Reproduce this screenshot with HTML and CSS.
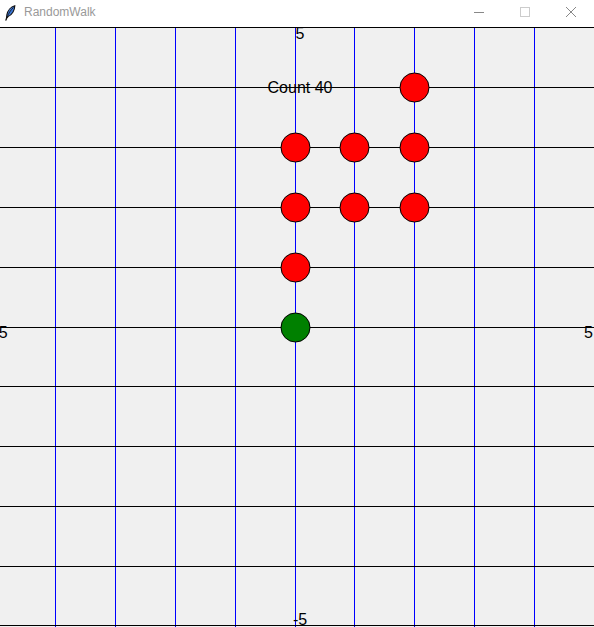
FILE: index.html
```html
<!DOCTYPE html>
<html>
<head>
  <title>RandomWalk</title>
  <link rel="stylesheet" href="styles.css">
</head>
<body>
  <div class="window">
    <div class="titlebar">
      <svg class="app-icon" width="11" height="16" viewBox="0 0 11 16">
        <path d="M9.8 0.8 C6 1.8 2.5 5.5 1.8 10.2 L1.4 13.6 L3 11.6 C7 10 9.8 5.2 9.8 0.8 Z" fill="#3b78d8" stroke="#111" stroke-width="1.1"/>
        <path d="M8.5 2.5 C5.5 5 3.5 8.5 2.2 12.5" fill="none" stroke="#111" stroke-width="0.8"/>
        <path d="M1.4 13.6 L0.8 15.6" stroke="#111" stroke-width="1.1"/>
      </svg>
      <span class="title">RandomWalk</span>
      <div class="controls">
        <span class="ctl"><svg width="12" height="12" viewBox="0 0 12 12"><path d="M1 6.5 H11" stroke="#888" stroke-width="1"/></svg></span>
        <span class="ctl"><svg width="12" height="12" viewBox="0 0 12 12"><rect x="1.5" y="1.5" width="9" height="9" fill="none" stroke="#ccc" stroke-width="1"/></svg></span>
        <span class="ctl"><svg width="12" height="12" viewBox="0 0 12 12"><path d="M1 1 L11 11 M11 1 L1 11" stroke="#888" stroke-width="1"/></svg></span>
      </div>
    </div>

    <!-- drawing area, page coordinates via viewBox -->
    <svg class="board" width="594" height="600" viewBox="0 27 594 600">
      <g class="vlines" stroke="#0000ff" stroke-width="1">
        <line x1="55.5" y1="27" x2="55.5" y2="627"/>
        <line x1="115.5" y1="27" x2="115.5" y2="627"/>
        <line x1="175.5" y1="27" x2="175.5" y2="627"/>
        <line x1="235.5" y1="27" x2="235.5" y2="627"/>
        <line x1="295.5" y1="27" x2="295.5" y2="627"/>
        <line x1="354.5" y1="27" x2="354.5" y2="627"/>
        <line x1="414.5" y1="27" x2="414.5" y2="627"/>
        <line x1="474.5" y1="27" x2="474.5" y2="627"/>
        <line x1="534.5" y1="27" x2="534.5" y2="627"/>
      </g>
      <g class="hlines" stroke="#000" stroke-width="1">
        <line x1="0" y1="27.5" x2="594" y2="27.5"/>
        <line x1="0" y1="87.5" x2="594" y2="87.5"/>
        <line x1="0" y1="147.5" x2="594" y2="147.5"/>
        <line x1="0" y1="207.5" x2="594" y2="207.5"/>
        <line x1="0" y1="267.5" x2="594" y2="267.5"/>
        <line x1="0" y1="327.5" x2="594" y2="327.5"/>
        <line x1="0" y1="386.5" x2="594" y2="386.5"/>
        <line x1="0" y1="446.5" x2="594" y2="446.5"/>
        <line x1="0" y1="506.5" x2="594" y2="506.5"/>
        <line x1="0" y1="566.5" x2="594" y2="566.5"/>
        <line x1="0" y1="625.5" x2="594" y2="625.5"/>
      </g>
      <g class="steps" stroke="#000" stroke-width="1">
        <circle cx="414.5" cy="87.5" r="14.5" fill="#ff0000"/>
        <circle cx="295.5" cy="147.5" r="14.5" fill="#ff0000"/>
        <circle cx="354.5" cy="147.5" r="14.5" fill="#ff0000"/>
        <circle cx="414.5" cy="147.5" r="14.5" fill="#ff0000"/>
        <circle cx="295.5" cy="207.5" r="14.5" fill="#ff0000"/>
        <circle cx="354.5" cy="207.5" r="14.5" fill="#ff0000"/>
        <circle cx="414.5" cy="207.5" r="14.5" fill="#ff0000"/>
        <circle cx="295.5" cy="267.5" r="14.5" fill="#ff0000"/>
        <circle cx="295.5" cy="327.5" r="14.5" fill="#008000"/>
      </g>
      <g class="labels">
        <text x="300" y="33.5">5</text>
        <text x="300" y="87">Count 40</text>
        <text x="0.5" y="332">-5</text>
        <text x="588.5" y="332">5</text>
        <text x="300" y="619.5">-5</text>
      </g>
    </svg>
  </div>
</body>
</html>
```

FILE: styles.css
```css
body { margin: 0; background: #f0f0f0; font-family: "Liberation Sans", Arial, sans-serif; }
.window { width: 594px; height: 627px; overflow: hidden; background: #f0f0f0; }
.titlebar { height: 27px; background: #fff; display: flex; align-items: center; }
.app-icon { margin-left: 5px; margin-top: -2px; }
.title { margin-left: 8px; font-size: 12px; color: #999; margin-top: -3px; }
.controls { margin-left: auto; display: flex; height: 100%; }
.ctl { width: 46px; display: flex; align-items: center; justify-content: center; margin-top: -4px; }
.board { display: block; }
.labels text { font-family: "Liberation Sans", Arial, sans-serif; font-size: 16px; fill: #000; text-anchor: middle; dominant-baseline: central; }
```
